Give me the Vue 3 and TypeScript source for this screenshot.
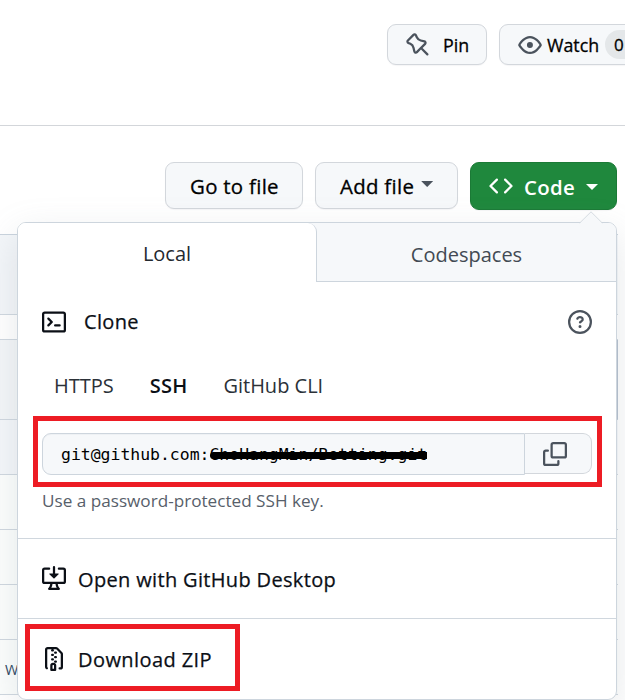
<script setup lang="ts">
import { ref } from 'vue'

const tabs = ['Local', 'Codespaces']
const activeTab = ref('Local')
const protocols = ['HTTPS', 'SSH', 'GitHub CLI']
const activeProtocol = ref('SSH')
const rows = [
  { id: 1, kind: 'blank' },
  { id: 2, kind: 'head' },
  { id: 3, kind: 'gap' },
  { id: 4, kind: 'commit' },
  { id: 5, kind: 'latest' },
  { id: 6, kind: 'file' },
  { id: 7, kind: 'file' },
  { id: 8, kind: 'file' },
  { id: 9, kind: 'file', name: 'W' },
]
</script>

<template>
  <div class="page">
    <header class="repo-head">
      <button class="btn small pin">
        <svg class="icon" viewBox="0 0 16 16"><path d="M4.456.734a1.75 1.75 0 0 1 2.826.504l.613 1.327a3.081 3.081 0 0 0 2.084 1.707l2.454.584c1.332.317 1.8 1.972.832 2.94L11.06 10l3.72 3.72a.75.75 0 0 1-1.06 1.06L10 11.06l-2.204 2.205c-.968.968-2.623.5-2.94-.832l-.584-2.454a3.081 3.081 0 0 0-1.707-2.084l-1.327-.613a1.75 1.75 0 0 1-.504-2.826L4.456.734ZM5.92 1.866a.25.25 0 0 0-.404-.072L1.794 5.516a.25.25 0 0 0 .072.404l1.328.613A4.582 4.582 0 0 1 5.73 9.63l.584 2.454a.25.25 0 0 0 .42.12l5.47-5.47a.25.25 0 0 0-.12-.42L9.63 5.73a4.581 4.581 0 0 1-3.098-2.537L5.92 1.866Z" /></svg>
        <span>Pin</span>
      </button>
      <button class="btn small watch">
        <svg class="icon" viewBox="0 0 16 16"><path d="M8 2c1.981 0 3.671.992 4.933 2.078 1.27 1.091 2.187 2.345 2.637 3.023a1.62 1.62 0 0 1 0 1.798c-.45.678-1.367 1.932-2.637 3.023C11.67 13.008 9.981 14 8 14c-1.981 0-3.671-.992-4.933-2.078C1.797 10.83.88 9.576.43 8.898a1.62 1.62 0 0 1 0-1.798c.45-.677 1.367-1.931 2.637-3.022C4.33 2.992 6.019 2 8 2ZM1.679 7.932a.12.12 0 0 0 0 .136c.411.622 1.241 1.75 2.366 2.717C5.176 11.758 6.527 12.5 8 12.5c1.473 0 2.825-.742 3.955-1.715 1.124-.967 1.954-2.096 2.366-2.717a.12.12 0 0 0 0-.136c-.412-.621-1.242-1.75-2.366-2.717C10.824 4.242 9.473 3.5 8 3.5c-1.473 0-2.825.742-3.955 1.715-1.124.967-1.954 2.096-2.366 2.717ZM8 10a2 2 0 1 1-.001-3.999A2 2 0 0 1 8 10Z" /></svg>
        <span>Watch</span>
        <span class="count">0</span>
      </button>
    </header>

    <div class="toolbar">
      <button class="btn goto">Go to file</button>
      <button class="btn add">Add file<i class="caret"></i></button>
      <button class="btn code">
        <svg class="icon" viewBox="0 0 16 16"><path d="m11.28 3.22 4.25 4.25a.75.75 0 0 1 0 1.06l-4.25 4.25a.749.749 0 0 1-1.275-.326.749.749 0 0 1 .215-.734L13.94 8l-3.72-3.72a.749.749 0 0 1 .326-1.275.749.749 0 0 1 .734.215Zm-6.56 0a.751.751 0 0 1 1.042.018.751.751 0 0 1 .018 1.042L2.06 8l3.72 3.72a.749.749 0 0 1-.326 1.275.749.749 0 0 1-.734-.215L.47 8.53a.75.75 0 0 1 0-1.06Z" /></svg>
        <span>Code</span><i class="caret"></i>
      </button>
    </div>

    <div class="files">
      <div v-for="r in rows" :key="r.id" class="file-row" :class="r.kind">{{ r.name }}</div>
    </div>

    <section class="popover">
      <svg class="pointer" viewBox="0 0 24 13"><path class="fill" d="M0 13 12 1l12 12Z" /><path class="edge" d="M.7 12 12 .8 23.3 12" /></svg>
      <nav class="tabs">
        <button v-for="t in tabs" :key="t" class="tab" :class="{ active: t === activeTab }" @click="activeTab = t">{{ t }}</button>
      </nav>
      <div class="clone">
        <div class="clone-head">
          <svg class="icon" viewBox="0 0 16 16"><path d="M0 2.75C0 1.784.784 1 1.75 1h12.5c.966 0 1.75.784 1.75 1.75v10.5A1.75 1.75 0 0 1 14.25 15H1.75A1.75 1.75 0 0 1 0 13.25Zm1.75-.25a.25.25 0 0 0-.25.25v10.5c0 .138.112.25.25.25h12.5a.25.25 0 0 0 .25-.25V2.75a.25.25 0 0 0-.25-.25ZM7.25 8a.749.749 0 0 1-.22.53l-2.25 2.25a.749.749 0 0 1-1.275-.326.749.749 0 0 1 .215-.734L5.44 8 3.72 6.28a.749.749 0 0 1 .326-1.275.749.749 0 0 1 .734.215l2.25 2.25c.141.14.22.331.22.53Zm1.5 1.5h3a.75.75 0 0 1 0 1.5h-3a.75.75 0 0 1 0-1.5Z" /></svg>
          <span class="medium">Clone</span>
          <svg class="icon help" viewBox="0 0 16 16"><path d="M0 8a8 8 0 1 1 16 0A8 8 0 0 1 0 8Zm8-6.5a6.5 6.5 0 1 0 0 13 6.5 6.5 0 0 0 0-13ZM6.92 6.085h.001a.749.749 0 1 1-1.342-.67c.169-.339.436-.701.849-.977C6.845 4.16 7.369 4 8 4a2.756 2.756 0 0 1 1.637.525c.503.377.863.965.863 1.725 0 .448-.115.83-.329 1.15-.205.307-.47.513-.692.662-.109.072-.22.138-.313.195l-.006.004a6.24 6.24 0 0 0-.26.16.952.952 0 0 0-.276.245.75.75 0 0 1-1.248-.832c.184-.264.42-.489.692-.661.103-.067.207-.132.313-.195l.007-.004c.1-.061.182-.11.258-.161a.969.969 0 0 0 .277-.245C8.96 6.514 9 6.427 9 6.25a.612.612 0 0 0-.262-.525A1.27 1.27 0 0 0 8 5.5c-.369 0-.595.09-.74.187a1.01 1.01 0 0 0-.34.398ZM9 11a1 1 0 1 1-2 0 1 1 0 0 1 2 0Z" /></svg>
        </div>
        <div class="protocols">
          <button v-for="p in protocols" :key="p" class="protocol" :class="{ active: p === activeProtocol }" @click="activeProtocol = p">{{ p }}</button>
        </div>
        <div class="url-row">
          <div class="url">git@github.com:<span class="hidden-part">ChoHangMin/Betting.git</span></div>
          <button class="copy">
            <svg class="icon" viewBox="0 0 16 16"><path d="M0 6.75C0 5.784.784 5 1.75 5h1.5a.75.75 0 0 1 0 1.5h-1.5a.25.25 0 0 0-.25.25v7.5c0 .138.112.25.25.25h7.5a.25.25 0 0 0 .25-.25v-1.5a.75.75 0 0 1 1.5 0v1.5A1.75 1.75 0 0 1 9.25 16h-7.5A1.75 1.75 0 0 1 0 14.25Z" /><path d="M5 1.75C5 .784 5.784 0 6.75 0h7.5C15.216 0 16 .784 16 1.75v7.5A1.75 1.75 0 0 1 14.25 11h-7.5A1.75 1.75 0 0 1 5 9.25Zm1.75-.25a.25.25 0 0 0-.25.25v7.5c0 .138.112.25.25.25h7.5a.25.25 0 0 0 .25-.25v-7.5a.25.25 0 0 0-.25-.25Z" /></svg>
          </button>
          <div class="mark mark-url"></div>
        </div>
        <p class="hint">Use a password-protected SSH key.</p>
      </div>
      <div class="action">
        <svg class="icon" viewBox="0 0 16 16"><path d="m4.927 5.427 2.896 2.896a.25.25 0 0 0 .354 0l2.896-2.896A.25.25 0 0 0 10.896 5H8.75V.75a.75.75 0 1 0-1.5 0V5H5.104a.25.25 0 0 0-.177.427Z" /><path d="M1.573 2.573a.25.25 0 0 0-.073.177v7.5a.25.25 0 0 0 .25.25h12.5a.25.25 0 0 0 .25-.25v-7.5a.25.25 0 0 0-.25-.25h-3a.75.75 0 1 1 0-1.5h3A1.75 1.75 0 0 1 16 2.75v7.5A1.75 1.75 0 0 1 14.25 12h-3.727c.099 1.041.52 1.872 1.292 2.757A.752.752 0 0 1 11.25 16h-6.5a.75.75 0 0 1-.565-1.243c.772-.885 1.192-1.716 1.292-2.757H1.75A1.75 1.75 0 0 1 0 10.25v-7.5A1.75 1.75 0 0 1 1.75 1h3a.75.75 0 0 1 0 1.5h-3a.25.25 0 0 0-.177.073ZM6.982 12a5.72 5.72 0 0 1-.765 2.5h3.566a5.72 5.72 0 0 1-.765-2.5H6.982Z" /></svg>
        <span class="medium">Open with GitHub Desktop</span>
      </div>
      <div class="action zip">
        <svg class="icon" viewBox="0 0 16 16"><path d="M3.5 1.75v11.5c0 .09.048.173.126.217a.75.75 0 0 1-.752 1.298A1.748 1.748 0 0 1 2 13.25V1.75C2 .784 2.784 0 3.75 0h5.586c.464 0 .909.185 1.237.513l2.914 2.914c.329.328.513.773.513 1.237v8.586A1.75 1.75 0 0 1 12.25 15h-.5a.75.75 0 0 1 0-1.5h.5a.25.25 0 0 0 .25-.25V4.664a.25.25 0 0 0-.073-.177L9.513 1.573a.25.25 0 0 0-.177-.073H7.25a.75.75 0 0 1 0 1.5h-.5a.75.75 0 0 1 0-1.5h-3a.25.25 0 0 0-.25.25Zm3.75 8.75h.5c.966 0 1.75.784 1.75 1.75v3a.75.75 0 0 1-.75.75h-2.5a.75.75 0 0 1-.75-.75v-3c0-.966.784-1.75 1.75-1.75ZM6 5.25a.75.75 0 0 1 .75-.75h.5a.75.75 0 0 1 0 1.5h-.5A.75.75 0 0 1 6 5.25Zm.75 2.25h.5a.75.75 0 0 1 0 1.5h-.5a.75.75 0 0 1 0-1.5ZM8 6.75A.75.75 0 0 1 8.75 6h.5a.75.75 0 0 1 0 1.5h-.5A.75.75 0 0 1 8 6.75ZM8.75 3h.5a.75.75 0 0 1 0 1.5h-.5a.75.75 0 0 1 0-1.5ZM8 9.75A.75.75 0 0 1 8.75 9h.5a.75.75 0 0 1 0 1.5h-.5A.75.75 0 0 1 8 9.75Zm-1 2.5v2.25h1v-2.25a.25.25 0 0 0-.25-.25h-.5a.25.25 0 0 0-.25.25Z" /></svg>
        <span class="medium">Download ZIP</span>
        <div class="mark mark-zip"></div>
      </div>
    </section>
  </div>
</template>

<style>
body { background: #fff; overflow: hidden; }
</style>

<style scoped>
* { box-sizing: border-box; }
.page {
  position: relative;
  width: 625px;
  height: 700px;
  overflow: hidden;
  background: #fff;
  color: #0b0f16;
  font-family: "Open Sans", "Noto Sans", sans-serif;
  font-size: 20px;
}
button { margin: 0; padding: 0; border: 0; background: none; color: inherit; font: inherit; }
.icon { width: 24px; height: 24px; flex: none; fill: currentColor; display: block; }
.repo-head {
  display: flex;
  gap: 12px;
  height: 126px;
  padding: 24px 0 0 387px;
  border-bottom: 1px solid #d3d6da;
}
.btn {
  display: flex;
  align-items: center;
  flex: none;
  height: 47px;
  border: 1px solid #d3d7dc;
  border-radius: 9px;
  background: #f6f8fa;
  box-shadow: 0 1px 1px rgba(31, 35, 40, 0.04);
  color: #000;
  font-size: 20.4px;
  letter-spacing: 0.3px;
  white-space: nowrap;
  -webkit-text-stroke: 0.3px currentColor;
}
.btn .icon { -webkit-text-stroke: 0; color: #4b535d; }
.btn.small { height: 41px; font-size: 17.8px; letter-spacing: 0; }
.pin { width: 100px; padding-left: 18px; gap: 13px; }
.watch { width: 170px; padding-left: 18px; gap: 5px; }
.watch .count {
  flex: none;
  width: 46px;
  height: 29px;
  margin-left: 1px;
  padding-left: 9px;
  border-radius: 15px;
  background: #e4e7e9;
  font-size: 17px;
  line-height: 29px;
  text-align: left;
}
.toolbar {
  display: flex;
  gap: 12px;
  height: 108px;
  padding: 36px 0 0 165px;
}
.goto { width: 138px; padding-left: 24px; }
.add { width: 143px; padding-left: 24px; gap: 7px; }
.caret {
  width: 12px;
  height: 6px;
  background: #4b535d;
  clip-path: polygon(0 0, 100% 0, 50% 100%);
}
.add .caret { margin-top: -3px; }
.code {
  width: 147px;
  height: 48px;
  padding-left: 18px;
  border-color: #1b7a36;
  background: #1f883d;
  color: #fff;
  font-weight: 600;
  -webkit-text-stroke: 0;
}
.code .icon { color: #fff; }
.code span { margin: 1px 11px 0 11px; }
.code .caret { background: #fff; margin-top: 2px; }
.files { width: 618px; }
.file-row { height: 55px; border-bottom: 1px solid #cfd7df; background: #fcfefd; }
.file-row.blank { height: 0; border: 0; }
.file-row.head { height: 81px; border-top: 1px solid #c9d3dd; background: #f3f6f9; }
.file-row.gap { height: 25px; background: #fff; }
.file-row.commit { height: 80px; border-right: 1px solid #b4c0ce; background: #f3f6f8; }
.file-row.latest { background: #f4f7fa; }
.file-row:last-child { padding: 16px 0 0 5px; color: #2c4560; font-size: 14.5px; line-height: 28px; }

.popover {
  position: absolute;
  top: 222px;
  left: 17px;
  width: 600px;
  height: 478px;
  border: 1px solid #cdd5dd;
  border-radius: 9px;
  background: #fff;
  box-shadow: 0 12px 36px rgba(140, 149, 159, 0.22);
}
.pointer { position: absolute; top: -12px; left: 561px; width: 24px; height: 13px; }
.pointer .fill { fill: #f6f8fa; }
.pointer .edge { fill: none; stroke: #d5dbe1; stroke-width: 1; }
.tabs { display: grid; grid-template-columns: 299px 299px; height: 59px; border-radius: 8px 8px 0 0; background: #f6f8fa; overflow: hidden; }
.tab {
  padding-top: 4px;
  border-bottom: 1px solid #cdd5dd;
  color: #424a53;
}
.tab.active {
  padding-top: 1px;
  border-right: 1px solid #cdd5dd;
  border-bottom: 0;
  border-top-right-radius: 9px;
  background: #fff;
  color: #24292f;
}
.clone { height: 257px; padding: 28px 24px 0; border-bottom: 1px solid #d0d7de; }
.clone-head { display: flex; align-items: center; height: 24px; gap: 18px; }
.clone-head span { margin-top: -2px; }
.medium { -webkit-text-stroke: 0.25px currentColor; letter-spacing: 0.34px; }
.help { margin-left: auto; color: #4b535d; }
.protocols { display: flex; gap: 36px; height: 28px; margin-top: 38px; padding-left: 12px; }
.protocol { color: #2b3138; line-height: 28px; }
.protocol.active { color: #0b0f16; font-weight: 600; letter-spacing: 0.2px; }
.url-row { position: relative; display: flex; height: 42px; margin-top: 33px; }
.url {
  width: 483px;
  padding-left: 18px;
  border: 1px solid #cdd5dd;
  border-radius: 9px 0 0 9px;
  background: #f6f8fa;
  box-shadow: inset 0 1px 0 rgba(208, 215, 222, 0.2);
  font: 16.45px/41px "DejaVu Sans Mono", "Liberation Mono", monospace;
  white-space: nowrap;
  color: #000;
}
.hidden-part { position: relative; }
.hidden-part::after {
  content: "";
  position: absolute;
  top: 7px;
  left: 1px;
  width: 217px;
  height: 7px;
  border-radius: 4px 0 0 4px;
  background: #000;
}
.copy {
  display: flex;
  flex: none;
  align-items: center;
  justify-content: center;
  width: 67px;
  height: 41px;
  padding-right: 7px;
  border: 1px solid #d3d7dc;
  border-left: 0;
  border-radius: 0 9px 9px 0;
  background: #f6f8fa;
  color: #4b535d;
}
.url { flex: none; }
.mark { position: absolute; border: 5px solid #ed1c24; }
.mark-url { top: -17px; left: -9px; width: 569px; height: 71px; }
.hint { margin: 12px 0 0; color: #57606a; font-size: 17.15px; line-height: 28px; }
.action { position: relative; display: flex; align-items: center; gap: 12px; height: 80px; padding: 0 24px; border-bottom: 1px solid #d0d7de; }
.action:last-child { border-bottom: 0; }
.action .icon { margin-top: -2px; }
.action .medium { margin-top: 1px; }
.action.zip .icon { margin-top: 0; }
.action.zip .medium { margin-top: 0; letter-spacing: 0.42px; }
.mark-zip { top: 5px; left: 7px; width: 215px; height: 67px; }
</style>
